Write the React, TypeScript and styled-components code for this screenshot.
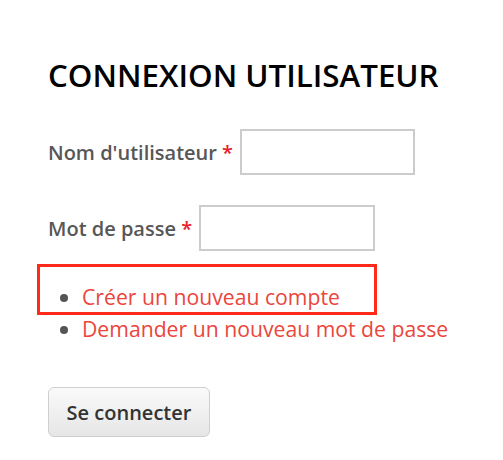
import React from 'react'
import styled, { createGlobalStyle } from 'styled-components'

const GlobalStyle = createGlobalStyle`
  html, body {
    margin: 0;
    padding: 0;
    background: #ffffff;
  }
  body {
    font-family: "Open Sans", "Noto Sans", sans-serif;
  }
`

const App = () => {
  return (
    <Page>
      <GlobalStyle />
      <Title>CONNEXION UTILISATEUR</Title>
      <Form onSubmit={(e) => e.preventDefault()}>
        <Field>
          <Label>
            Nom d'utilisateur <Required>*</Required>
          </Label>
          <Input type="text" w={175} />
        </Field>
        <Field>
          <Label>
            Mot de passe <Required>*</Required>
          </Label>
          <Input type="password" w={176} />
        </Field>
        <Links>
          <Item highlighted>
            <LinkText href="#">Créer un nouveau compte</LinkText>
          </Item>
          <Item>
            <LinkText href="#">Demander un nouveau mot de passe</LinkText>
          </Item>
        </Links>
        <Button type="submit">Se connecter</Button>
      </Form>
    </Page>
  )
}

export default App

const Page = styled.div`
  padding: 57px 20px 0 48px;
  width: 503px;
  height: 460px;
  box-sizing: border-box;
`
const Title = styled.h2`
  margin: 0;
  font-size: 31.3px;
  font-weight: 600;
  color: #000;
  line-height: 36px;
`
const Form = styled.form`
  margin-top: 36px;
`
const Field = styled.div`
  display: flex;
  align-items: center;
  gap: 7px;
  margin-bottom: 30px;
`
const Label = styled.label`
  font-size: 20px;
  font-weight: 600;
  color: #575757;
`
const Required = styled.span`
  color: #e8202a;
`
const Input = styled.input<{ w: number }>`
  width: ${({ w }) => w}px;
  height: 46px;
  box-sizing: border-box;
  border: 2px solid #cccccc;
  outline: none;
  background: #fff;
`
const Links = styled.ul`
  margin: 0;
  padding: 0 0 0 34px;
  list-style: disc;
`
const Item = styled.li<{ highlighted?: boolean }>`
  font-size: 21.2px;
  line-height: 32px;
  color: #555;
  position: relative;
  ${({ highlighted }) => highlighted && `
    &::after {
      content: "";
      position: absolute;
      left: -45px;
      top: -17px;
      width: 340px;
      height: 51px;
      box-sizing: border-box;
      border: 3px solid #ff2a1a;
    }
  `}
`
const LinkText = styled.a`
  color: #ea463c;
  text-decoration: none;
`
const Button = styled.button`
  margin-top: 42px;
  width: 162px;
  height: 50px;
  border: 1px solid #cfcfcf;
  border-radius: 6px;
  background: linear-gradient(#fafafa, #e6e6e6);
  font-family: "Open Sans", sans-serif;
  font-size: 20px;
  font-weight: 600;
  color: #333;
  cursor: pointer;
`
